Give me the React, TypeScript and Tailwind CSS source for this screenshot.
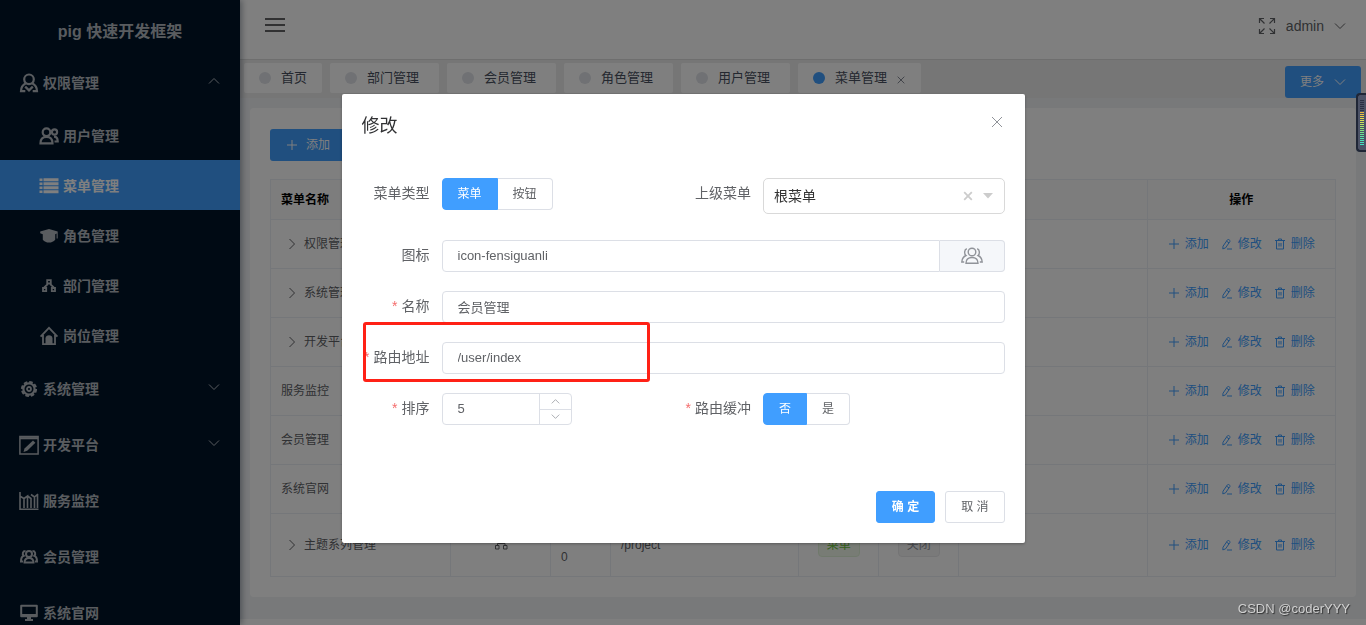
import type { ReactNode } from "react";

type IconName =
  | "permission"
  | "users"
  | "list"
  | "cap"
  | "sitemap"
  | "home"
  | "gear"
  | "editor"
  | "chart"
  | "members"
  | "monitor";

interface MenuItem {
  label: string;
  icon: IconName;
  open?: boolean;
  active?: boolean;
  children?: MenuItem[];
}

const MENU: MenuItem[] = [
  {
    label: "权限管理",
    icon: "permission",
    open: true,
    children: [
      { label: "用户管理", icon: "users" },
      { label: "菜单管理", icon: "list", active: true },
      { label: "角色管理", icon: "cap" },
      { label: "部门管理", icon: "sitemap" },
      { label: "岗位管理", icon: "home" },
    ],
  },
  { label: "系统管理", icon: "gear", children: [] },
  { label: "开发平台", icon: "editor", children: [] },
  { label: "服务监控", icon: "chart" },
  { label: "会员管理", icon: "members" },
  { label: "系统官网", icon: "monitor" },
];

const TABS = ["首页", "部门管理", "会员管理", "角色管理", "用户管理", "菜单管理"];

const ROWS = [
  { name: "权限管理", expandable: true },
  { name: "系统管理", expandable: true },
  { name: "开发平台", expandable: true },
  { name: "服务监控", expandable: false },
  { name: "会员管理", expandable: false },
  { name: "系统官网", expandable: false },
];

const METER = [
  "#2b3044", "#2b3044", "#2b3044", "#2b3044", "#2b3044", "#2b3044",
  "#e8b53c", "#ebc341", "#ebd046", "#e6dc4b", "#dae252", "#cbe35a",
  "#b9e463", "#a6e46c", "#94e476", "#83e480", "#74e48b", "#67e496",
  "#5ce4a1", "#53e3ac", "#4ce2b5", "#46e1bd", "#42e0c3",
];

const ICONS: Record<IconName, ReactNode> = {
  permission: (
    <g fill="none" stroke="currentColor" strokeWidth="2.2">
      <circle cx="10" cy="6.3" r="4.800" />
      <path d="M6.800 10.300C4 11.800 2 14 2 18.200h4.300M13.200 10.300c2.800 1.500 4.800 3.700 4.800 7.900h-4.300" />
      <path d="M6.200 13.600 10 17.400l3.800-3.800" />
    </g>
  ),
  users: (
    <g fill="none" stroke="currentColor" strokeWidth="2.2">
      <circle cx="7.500" cy="6.200" r="3.800" />
      <path d="M1.500 17.300c0-4.400 2.300-6.400 6-6.400s6 2 6 6.400z" />
      <circle cx="15.500" cy="6" r="2.600" />
      <path d="M15 10.700c2.500 0 3.700 1.500 3.700 4.800H15.500" />
    </g>
  ),
  list: (
    <path
      fill="currentColor"
      d="M.5 2.500h3v2.500h-3zM4.500 2.200h15v3h-15zM.5 6.500h3V9h-3zM4.500 6.200h15v3h-15zM.5 10.500h3V13h-3zM4.500 10.200h15v3h-15zM.5 14.500h3V17h-3zM4.500 14.200h15v3h-15z"
    />
  ),
  cap: (
    <path
      fill="currentColor"
      d="M10 3 1.200 5.400v1.800l2.600 1v5.600c1.500 1.900 3.600 2.800 6.200 2.800s4.700-.9 6.200-2.800V8.200l1.400-.6v5h1.100V5.400z"
    />
  ),
  sitemap: (
    <g fill="none" stroke="currentColor" strokeWidth="1.800">
      <path d="M8.200 4.200h3.600v3.200H8.200zM4 12h3.200v3.200H4zM12.800 12H16v3.200h-3.200z" />
      <path d="M9 7.800 5.200 11.500M11 7.800l3.800 3.700" />
    </g>
  ),
  home: (
    <g>
      <path
        d="M1.600 10.600 10 1.800l8.400 8.800M4 9v9.200h12V9"
        fill="none"
        stroke="currentColor"
        strokeWidth="1.800"
      />
      <path d="M6.500 18v-5.500c0-4.200 7-4.200 7 0V18z" fill="currentColor" />
    </g>
  ),
  gear: (
    <g fill="none" stroke="currentColor">
      <circle cx="10" cy="10" r="5.600" strokeWidth="2.200" />
      <circle cx="10" cy="10" r="7.100" strokeWidth="2" strokeDasharray="3.600 1.976" />
      <circle cx="10" cy="10" r="2" strokeWidth="1.800" />
    </g>
  ),
  editor: (
    <g>
      <path d="M.9 1.500h18.200V19H.9z" fill="none" stroke="currentColor" strokeWidth="1.500" />
      <path d="M1 3.200h18" stroke="currentColor" strokeWidth="2.200" />
      <path d="m4.500 17 1-3.600 8.500-8 2.400 2.400-8.200 8z" fill="currentColor" />
    </g>
  ),
  chart: (
    <path
      d="M1 1v17.300h18.500M5 17V7.500L1.500 5.500M8.500 17V5L5 7.500M8.500 5 12 7.500V17M15.500 17V6L12 3.500M15.500 6l3.500-3M18.500 17V3"
      fill="none"
      stroke="currentColor"
      strokeWidth="1.600"
    />
  ),
  members: (
    <g fill="none" stroke="currentColor" strokeWidth="2">
      <circle cx="10" cy="7" r="3" />
      <path d="M5.500 15.500c0-3.200 1.500-4.600 4.500-4.600s4.500 1.400 4.500 4.600z" />
      <path d="M6.500 4c-2.800 0-3.500 3-1.800 4.800-2 .8-2.700 2.500-2.700 5.700h2M13.500 4c2.800 0 3.500 3 1.800 4.800 2 .8 2.700 2.500 2.700 5.700h-2" />
    </g>
  ),
  monitor: (
    <g>
      <path
        d="M2.200 2.800h15.600v10.400H2.200z"
        fill="none"
        stroke="currentColor"
        strokeWidth="2"
        strokeLinejoin="round"
      />
      <path d="M2 11h16v2.500H2zM8 13.500h4v2.500h2v2H6v-2h2z" fill="currentColor" />
    </g>
  ),
};

function Icon({ name }: { name: IconName }) {
  return (
    <svg viewBox="0 0 20 20" className="h-5 w-5 shrink-0" aria-hidden="true">
      {ICONS[name]}
    </svg>
  );
}

const LINES = {
  up: "M1 8.500 6 3.500l5 5",
  down: "M1 3.500l5 5 5-5",
  right: "M3.500 1l5 5-5 5",
  plus: "M6 1v10M1 6h10",
  close: "M1 1l10 10M11 1 1 11",
  pen: "M2 8.200 6.300 2c.4-.6 1-.7 1.600-.3l.6.4c.6.4.7 1 .3 1.600L4.500 9.900l-2.700 1zM5.600 3.200l2.500 1.700M6 11h5",
  trash: "M1 2.500h10M2.500 2.500v8.500h7V2.500M4.500 2.500V1h3v1.500M5 5v3.500M7 5v3.500",
};

function LineIcon({ name, className = "h-3 w-3" }: { name: keyof typeof LINES; className?: string }) {
  return (
    <svg
      viewBox="0 0 12 12"
      className={`shrink-0 ${className}`}
      fill="none"
      stroke="currentColor"
      aria-hidden="true"
    >
      <path d={LINES[name]} />
    </svg>
  );
}

function Sidebar() {
  return (
    <aside className="relative z-10 w-60 shrink-0 overflow-hidden bg-[#001529] text-sm font-bold text-[#b2b8bf] shadow-[2px_0_6px_rgba(0,21,41,0.35)]">
      <h1 className="flex h-[54px] items-center justify-center pt-[10px] text-base">pig 快速开发框架</h1>
      <nav>
        {MENU.map((item) => (
          <div key={item.label}>
            <a href="#" className="flex h-14 items-center gap-1 pt-px pr-5 pl-[19px]">
              <Icon name={item.icon} />
              <span className="flex-1">{item.label}</span>
              {item.children && <LineIcon name={item.open ? "up" : "down"} className="mb-1 h-3 w-3" />}
            </a>
            {item.open &&
              item.children?.map((child) => (
                <a
                  key={child.label}
                  href="#"
                  className={`flex h-[50px] items-center gap-1 pt-[2px] pl-[39px] ${
                    child.active ? "bg-[#409eff] text-white" : ""
                  }`}
                >
                  <Icon name={child.icon} />
                  {child.label}
                </a>
              ))}
          </div>
        ))}
      </nav>
    </aside>
  );
}

function Topbar() {
  return (
    <header className="flex h-[59px] items-center justify-between pr-5 pb-2 pl-[25px] text-[#606266]">
      <button type="button" aria-label="折叠菜单" className="text-[#303133]">
        <svg viewBox="0 0 20 16" className="h-4 w-5" aria-hidden="true">
          <path d="M0 1h20M0 7h20M0 13h20" stroke="currentColor" strokeWidth="1.500" />
        </svg>
      </button>
      <div className="flex items-center gap-[10px]">
        <button type="button" aria-label="全屏">
          <svg viewBox="0 0 18 18" className="h-[18px] w-[18px]" fill="none" stroke="currentColor" strokeWidth="1.200" aria-hidden="true">
            <path d="M1.500 6V1.500H6M1.500 1.500l5 5M12 1.500h4.500V6M16.500 1.500l-5 5M1.500 12v4.500H6M1.500 16.500l5-5M12 16.500h4.500V12M16.500 16.500l-5-5" />
          </svg>
        </button>
        <button type="button" className="flex items-center gap-[10px] text-sm">
          admin
          <LineIcon name="down" />
        </button>
      </div>
    </header>
  );
}

function TabBar() {
  return (
    <div className="flex h-[39px] items-start border-t border-[#dcdcdc] bg-[#ededed] pr-[5px] pl-1 shadow-[0_1px_2px_rgba(0,0,0,0.1)]">
      <div className="flex flex-1 gap-2 pt-[3px] text-[13px] text-[#495060]">
        {TABS.map((tab, i) => {
          const active = i === TABS.length - 1;
          return (
            <a
              key={tab}
              href="#"
              className={`flex h-[30px] items-center gap-[10px] rounded-xs bg-white pl-[15px] ${
                i === 0 ? "pr-[15px]" : active ? "pr-4" : "pr-5"
              }`}
            >
              <span className={`h-3 w-3 rounded-full ${active ? "bg-[#409eff]" : "bg-[#e0e3e8]"}`} />
              {tab}
              {active && <LineIcon name="close" className="mt-1 h-2 w-2" />}
            </a>
          );
        })}
      </div>
      <button
        type="button"
        className="mt-[6px] flex h-8 items-center gap-[10px] rounded-[3px] bg-[#409eff] px-[15px] text-xs text-white"
      >
        更多
        <LineIcon name="down" />
      </button>
    </div>
  );
}

function RowActions() {
  return (
    <div className="flex justify-center gap-3 text-[#409eff]">
      <button type="button" className="flex items-center gap-[5px]">
        <LineIcon name="plus" />
        添加
      </button>
      <button type="button" className="flex items-center gap-[5px]">
        <LineIcon name="pen" />
        修改
      </button>
      <button type="button" className="flex items-center gap-[5px]">
        <LineIcon name="trash" />
        删除
      </button>
    </div>
  );
}

function NameCell({ name, expandable }: { name: string; expandable: boolean }) {
  return (
    <td className="pl-[10px]">
      <span className="flex items-center">
        {expandable && <LineIcon name="right" className="mr-[6px] ml-[5px] h-3 w-3" />}
        {name}
      </span>
    </td>
  );
}

function MenuTable() {
  return (
    <table className="w-full table-fixed border-collapse text-xs text-[#606266] [&_td]:border [&_td]:border-[#ebeef5] [&_th]:border [&_th]:border-[#ebeef5]">
      <colgroup>
        <col className="w-[180px]" />
        <col className="w-[100px]" />
        <col className="w-[60px]" />
        <col />
        <col className="w-20" />
        <col className="w-20" />
        <col />
        <col />
      </colgroup>
      <thead>
        <tr className="h-10 bg-[#fafafa] text-black">
          <th className="pl-[10px] text-left">菜单名称</th>
          <th />
          <th />
          <th />
          <th />
          <th />
          <th />
          <th>操作</th>
        </tr>
      </thead>
      <tbody>
        {ROWS.map((row) => (
          <tr key={row.name} className="h-[49px]">
            <NameCell {...row} />
            <td />
            <td />
            <td />
            <td />
            <td />
            <td />
            <td>
              <RowActions />
            </td>
          </tr>
        ))}
        <tr className="h-[63px]">
          <NameCell name="主题系列管理" expandable />
          <td>
            <span className="flex justify-center">
              <svg viewBox="0 0 14 14" className="h-[14px] w-[14px]" fill="none" stroke="currentColor" aria-hidden="true">
                <path d="M5 .5h4v3H5zM1.500 7.500H5V11H1.500zM9.500 7.500H13V11H9.500zM7 3.500v2M3.500 7.500v-2h7.500v2" />
              </svg>
            </span>
          </td>
          <td className="pt-[23px] pl-[10px]">0</td>
          <td className="pl-[10px]">/project</td>
          <td className="text-center">
            <span className="inline-block h-6 rounded border border-[#e1f3d8] bg-[#f0f9eb] px-2 leading-[22px] text-[#67c23a]">
              菜单
            </span>
          </td>
          <td className="text-center">
            <span className="inline-block h-6 rounded border border-[#e9e9eb] bg-[#f4f4f5] px-2 leading-[22px] text-[#909399]">
              关闭
            </span>
          </td>
          <td />
          <td>
            <RowActions />
          </td>
        </tr>
      </tbody>
    </table>
  );
}

const INPUT = "h-8 rounded border border-[#dcdfe6] px-[15px] pb-[2px] text-[13px] text-[#606266] outline-none";

function Label({ htmlFor, required, children }: { htmlFor: string; required?: boolean; children: ReactNode }) {
  return (
    <label
      htmlFor={htmlFor}
      className="w-20 shrink-0 pr-3 text-right text-sm leading-[30px] whitespace-nowrap text-[#606266]"
    >
      {required && <span className="mr-1 text-[#f56c6c]">*</span>}
      {children}
    </label>
  );
}

function RadioGroup({ id, options }: { id: string; options: string[] }) {
  return (
    <div className="flex text-xs text-[#606266]">
      {options.map((option, i) => (
        <label
          key={option}
          className="flex h-8 items-center border border-l-0 border-[#dcdfe6] px-[15px] first:rounded-l first:border-l last:rounded-r has-checked:border-[#409eff] has-checked:bg-[#409eff] has-checked:text-white"
        >
          <input
            type="radio"
            id={i === 0 ? id : undefined}
            name={id}
            defaultChecked={i === 0}
            className="sr-only"
          />
          {option}
        </label>
      ))}
    </div>
  );
}

function EditDialog() {
  return (
    <div className="fixed inset-0 z-20 flex items-start justify-center bg-black/50 pt-[94px]">
      <div
        role="dialog"
        aria-labelledby="dialog-title"
        className="w-1/2 rounded-xs bg-white p-5 shadow-[0_1px_3px_rgba(0,0,0,0.3)]"
      >
        <div className="flex items-center justify-between pr-[2px]">
          <h2 id="dialog-title" className="text-lg leading-6 text-[#303133]">
            修改
          </h2>
          <button type="button" aria-label="关闭" className="mb-2 text-[#909399]">
            <LineIcon name="close" />
          </button>
        </div>

        <form className="flex flex-col gap-[19px] pt-10">
          <div className="mb-[7px] flex items-start">
            <div className="flex flex-1">
              <Label htmlFor="type">菜单类型</Label>
              <RadioGroup id="type" options={["菜单", "按钮"]} />
            </div>
            <div className="flex flex-1">
              <Label htmlFor="parent">上级菜单</Label>
              <div className="flex h-9 flex-1 items-center rounded-[5px] border border-[#d9d9d9] px-[10px]">
                <select id="parent" className="min-w-0 flex-1 appearance-none text-sm text-[#333] outline-none">
                  <option>根菜单</option>
                </select>
                <button type="button" aria-label="清除" className="text-[#ccc]">
                  <svg viewBox="0 0 10 10" className="h-[10px] w-[10px]" aria-hidden="true">
                    <path d="M1.200 1.200l7.600 7.600M8.800 1.200 1.200 8.800" stroke="currentColor" strokeWidth="1.800" />
                  </svg>
                </button>
                <svg viewBox="0 0 10 6" className="mr-px ml-[10px] h-[6px] w-[10px]" aria-hidden="true">
                  <path d="M0 0h10L5 5.500z" fill="#ccc" />
                </svg>
              </div>
            </div>
          </div>

          <div className="flex">
            <Label htmlFor="icon">图标</Label>
            <input id="icon" defaultValue="icon-fensiguanli" className={`${INPUT} min-w-0 flex-1 rounded-r-none`} />
            <button
              type="button"
              aria-label="选择图标"
              className="flex h-8 w-[65px] items-center justify-center rounded-r border border-l-0 border-[#dcdfe6] bg-[#f5f7fa] text-[#909399]"
            >
              <svg viewBox="0 0 22 18" className="h-[18px] w-[22px]" fill="none" stroke="currentColor" strokeWidth="1.400" aria-hidden="true">
                <circle cx="11" cy="5" r="3.800" />
                <path d="M5 16.300c0-3.900 2.200-5.800 6-5.800s6 1.900 6 5.800z" />
                <path d="M5.800 1.800C3.200 2.500 3 7 5 8.500 2.500 9.500 1 12 .8 15H3.200M16.200 1.800C18.800 2.500 19 7 17 8.500c2.500 1 4 3.500 4.200 6.500h-2.400" />
              </svg>
            </button>
          </div>

          <div className="flex">
            <Label htmlFor="name" required>
              名称
            </Label>
            <input id="name" defaultValue="会员管理" className={`${INPUT} min-w-0 flex-1`} />
          </div>

          <div className="relative flex">
            <Label htmlFor="path" required>
              路由地址
            </Label>
            <input id="path" defaultValue="/user/index" className={`${INPUT} min-w-0 flex-1`} />
            {/* Highlight round the route path */}
            <div className="pointer-events-none absolute -top-5 left-px h-[60px] w-[287px] rounded-[3px] border-3 border-[#ff2116]" />
          </div>

          <div className="flex">
            <div className="flex flex-1">
              <Label htmlFor="sort" required>
                排序
              </Label>
              <div className="flex h-8 w-[130px] overflow-hidden rounded border border-[#dcdfe6]">
                <input
                  id="sort"
                  defaultValue="5"
                  className="min-w-0 flex-1 px-[15px] text-[13px] text-[#606266] outline-none"
                />
                <div className="flex w-8 flex-col border-l border-[#dcdfe6] text-[#909399]">
                  <button
                    type="button"
                    aria-label="增加"
                    className="flex flex-1 items-center justify-center border-b border-[#dcdfe6]"
                  >
                    <LineIcon name="up" className="h-[9px] w-[9px]" />
                  </button>
                  <button type="button" aria-label="减少" className="flex flex-1 items-center justify-center">
                    <LineIcon name="down" className="h-[9px] w-[9px]" />
                  </button>
                </div>
              </div>
            </div>
            <div className="flex flex-1">
              <Label htmlFor="cache" required>
                路由缓冲
              </Label>
              <RadioGroup id="cache" options={["否", "是"]} />
            </div>
          </div>
        </form>

        <div className="flex justify-end gap-[10px] pt-[66px] text-xs">
          <button
            type="button"
            className="h-8 rounded-[3px] border border-[#409eff] bg-[#409eff] px-[15px] font-bold text-white"
          >
            确 定
          </button>
          <button type="button" className="h-8 rounded-[3px] border border-[#dcdfe6] px-[15px] text-[#606266]">
            取 消
          </button>
        </div>
      </div>
    </div>
  );
}

export default function App() {
  return (
    <div className="flex h-screen overflow-hidden bg-white font-['Liberation_Sans','Noto_Sans_CJK_SC',sans-serif]">
      <Sidebar />
      <div className="flex min-w-0 flex-1 flex-col">
        <Topbar />
        <TabBar />
        <main className="bg-[#f0f2f5] px-[10px] pt-[10px] pb-[22px]">
          <section className="rounded bg-white px-5 pt-[21px] pb-5">
            <button
              type="button"
              className="mb-[18px] flex h-8 items-center gap-2 rounded-[3px] bg-[#409eff] px-4 text-xs text-white"
            >
              <LineIcon name="plus" />
              添加
            </button>
            <MenuTable />
          </section>
        </main>
      </div>

      <EditDialog />

      {/* Level meter docked to the window edge */}
      <div className="fixed top-[93px] right-0 z-30 flex h-[59px] w-[10px] flex-col gap-px rounded-l border-2 border-r-0 border-[#1f2636] bg-[#4c5266] pt-[5px] pl-[2px]">
        {METER.map((color, i) => (
          <span key={i} className="h-px w-1 shrink-0" style={{ backgroundColor: color }} />
        ))}
      </div>

      <p className="fixed right-4 bottom-[6px] z-30 text-[13px] leading-5 text-[#d0d0d0] [text-shadow:1px_1px_1px_rgba(0,0,0,0.6)]">
        CSDN @coderYYY
      </p>
    </div>
  );
}
